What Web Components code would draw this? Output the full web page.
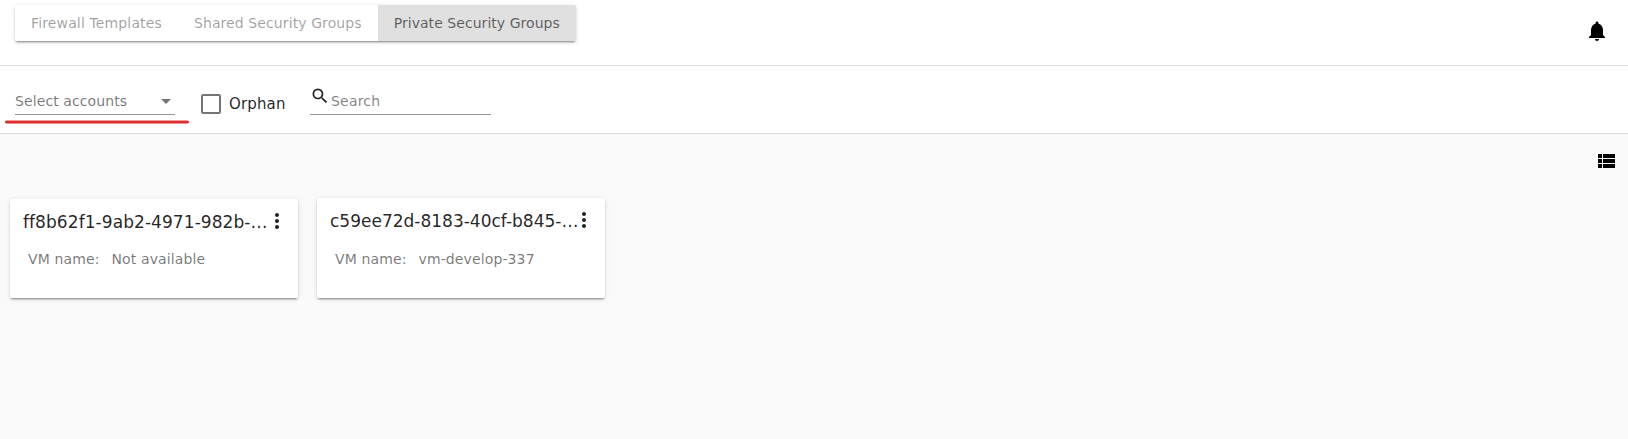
<!DOCTYPE html>
<html lang="en">
<head>
<meta charset="utf-8">
<title>Private Security Groups</title>
<style>
html,body{margin:0;height:100%}
body{font:14px/20px "DejaVu Sans",sans-serif;color:rgba(0,0,0,.87);background:#fafafa;overflow:hidden}
</style>
</head>
<body>
<sg-page></sg-page>
<script>
const define = (name, markup) => {
  const template = document.createElement('template');
  template.innerHTML = markup;
  customElements.define(name, class extends HTMLElement {
    constructor() {
      super();
      this.attachShadow({mode: 'open'}).append(template.content.cloneNode(true));
    }
  });
};

const icons = {
  bell: 'M12 22c1.1 0 2-.9 2-2h-4c0 1.1.89 2 2 2zm6-6v-5c0-3.07-1.64-5.64-4.5-6.32V4c0-.83-.67-1.5-1.5-1.5s-1.5.67-1.5 1.5v.68C7.63 5.36 6 7.92 6 11v5l-2 2v1h16v-1l-2-2z',
  list: 'M4 14h4v-4H4v4zm0 5h4v-4H4v4zM4 9h4V5H4v4zm5 5h12v-4H9v4zm0 5h12v-4H9v4zM9 5v4h12V5H9z',
  dots: 'M12 8c1.1 0 2-.9 2-2s-.9-2-2-2-2 .9-2 2 .9 2 2 2zm0 2c-1.1 0-2 .9-2 2s.9 2 2 2 2-.9 2-2-.9-2-2-2zm0 6c-1.1 0-2 .9-2 2s.9 2 2 2 2-.9 2-2-.9-2-2-2z',
  search: 'M9.5,3A6.5,6.5 0 0,1 16,9.5C16,11.11 15.41,12.59 14.44,13.73L14.71,14H15.5L20.5,19L19,20.5L14,15.5V14.71L13.73,14.44C12.59,15.41 11.11,16 9.5,16A6.5,6.5 0 0,1 3,9.5A6.5,6.5 0 0,1 9.5,3M9.5,5C7,5 5,7 5,9.5C5,12 7,14 9.5,14C12,14 14,12 14,9.5C14,7 12,5 9.5,5Z'
};
customElements.define('sg-icon', class extends HTMLElement {
  constructor() {
    super();
    this.attachShadow({mode: 'open'});
  }
  connectedCallback() {
    this.shadowRoot.innerHTML = `<style>:host{display:block;flex:none;width:24px;height:24px}svg{display:block;width:100%;height:100%;fill:currentColor}</style>
      <svg viewBox="0 0 24 24"><path d="${icons[this.getAttribute('name')]}"/></svg>`;
  }
});

define('sg-tab', `<style>
:host{display:block;padding:0 16px;line-height:36px;letter-spacing:.095px;color:rgba(0,0,0,.38);white-space:nowrap}
:host(:first-child){letter-spacing:.14px}
:host([selected]){background:#e0e0e0;color:rgba(0,0,0,.6);letter-spacing:.05px}
</style><slot></slot>`);

define('sg-tabs', `<style>
:host{display:flex;width:max-content;height:36px;border-radius:2px;overflow:hidden;background:#fff;
box-shadow:0 3px 1px -2px rgba(0,0,0,.2),0 2px 2px 0 rgba(0,0,0,.14),0 1px 5px 0 rgba(0,0,0,.12)}
</style><slot></slot>`);

define('sg-header', `<style>
:host{display:flex;box-sizing:border-box;justify-content:space-between;height:66px;padding:5px 19px 0 15px;background:#fff;border-bottom:1px solid #dcdcdc}
sg-icon{margin-top:14px;color:#000}
</style><slot></slot><sg-icon name="bell"></sg-icon>`);

define('sg-select', `<style>
:host{display:block;width:160px;margin-top:25px;position:relative;color:rgba(0,0,0,.54);letter-spacing:.1px}
.row{display:flex;align-items:flex-start;justify-content:space-between;height:23px;border-bottom:1px solid #949494;padding-right:4px}
i{margin-top:8px;border:5px solid transparent;border-top-color:currentColor;border-bottom:0}
.mark{position:absolute;left:-10px;top:29px;width:184px;height:4px;border-radius:2px;background:linear-gradient(#f0a0a0 1px,#e02c2c 1px 3px,#ee9090 3px)}
</style><div class="row"><slot></slot><i></i></div><div class="mark"></div>`);

define('sg-checkbox', `<style>
:host{display:flex;align-items:center;gap:8px;width:85px;height:24px;margin:26px 0 0 26px;font-size:15px;letter-spacing:.15px}
i{box-sizing:border-box;width:20px;height:20px;border:2px solid #757575;border-radius:2px}
</style><i></i><slot></slot>`);

define('sg-search', `<style>
:host{display:flex;box-sizing:border-box;width:181px;height:29px;margin:20px 0 0 24px;border-bottom:1px solid #949494}
sg-icon{width:20px;height:20px}
span{margin:5px 0 0 1px;letter-spacing:.2px;color:rgba(0,0,0,.5)}
</style><sg-icon name="search"></sg-icon><span><slot></slot></span>`);

define('sg-filters', `<style>
:host{display:flex;box-sizing:border-box;align-items:flex-start;height:68px;padding-left:15px;background:#fff;border-bottom:1px solid #dcdcdc}
</style><slot></slot>`);

define('sg-card', `<style>
:host{display:block;box-sizing:border-box;width:288px;height:99px;padding:11px 9px 0 13px;border-radius:2px;background:#fff;
box-shadow:0 3px 1px -2px rgba(0,0,0,.2),0 2px 2px 0 rgba(0,0,0,.14),0 1px 5px 0 rgba(0,0,0,.12)}
:host([tall]){height:100px}
.head{display:grid;grid-template-columns:242px 24px;height:24px;line-height:24px;font-size:17px;letter-spacing:.07px;white-space:nowrap}
:host([tall]) .head{letter-spacing:0}
.info{display:flex;gap:12px;margin:15px 0 0 5px;letter-spacing:.12px;color:rgba(0,0,0,.54)}
:host([tall]) .info{margin-top:16px}
.head sg-icon{margin-top:-1px}
</style><div class="head"><slot name="title"></slot><sg-icon name="dots"></sg-icon></div>
<div class="info"><span>VM name:</span><slot></slot></div>`);

define('sg-page', `<style>
:host{display:block}
.tools{display:flex;justify-content:flex-end;padding:15px 10px 0 0;color:#000}
.cards{display:flex;align-items:flex-end;gap:19px;height:101px;padding:24px 0 0 10px}
</style>
<sg-header><sg-tabs><sg-tab>Firewall Templates</sg-tab><sg-tab>Shared Security Groups</sg-tab><sg-tab selected>Private Security Groups</sg-tab></sg-tabs></sg-header>
<sg-filters><sg-select>Select accounts</sg-select><sg-checkbox>Orphan</sg-checkbox><sg-search>Search</sg-search></sg-filters>
<div class="tools"><sg-icon name="list"></sg-icon></div>
<div class="cards">
<sg-card><span slot="title">ff8b62f1-9ab2-4971-982b-…</span><span>Not available</span></sg-card>
<sg-card tall><span slot="title">c59ee72d-8183-40cf-b845-…</span><span>vm-develop-337</span></sg-card>
</div>`);
</script>
</body>
</html>
